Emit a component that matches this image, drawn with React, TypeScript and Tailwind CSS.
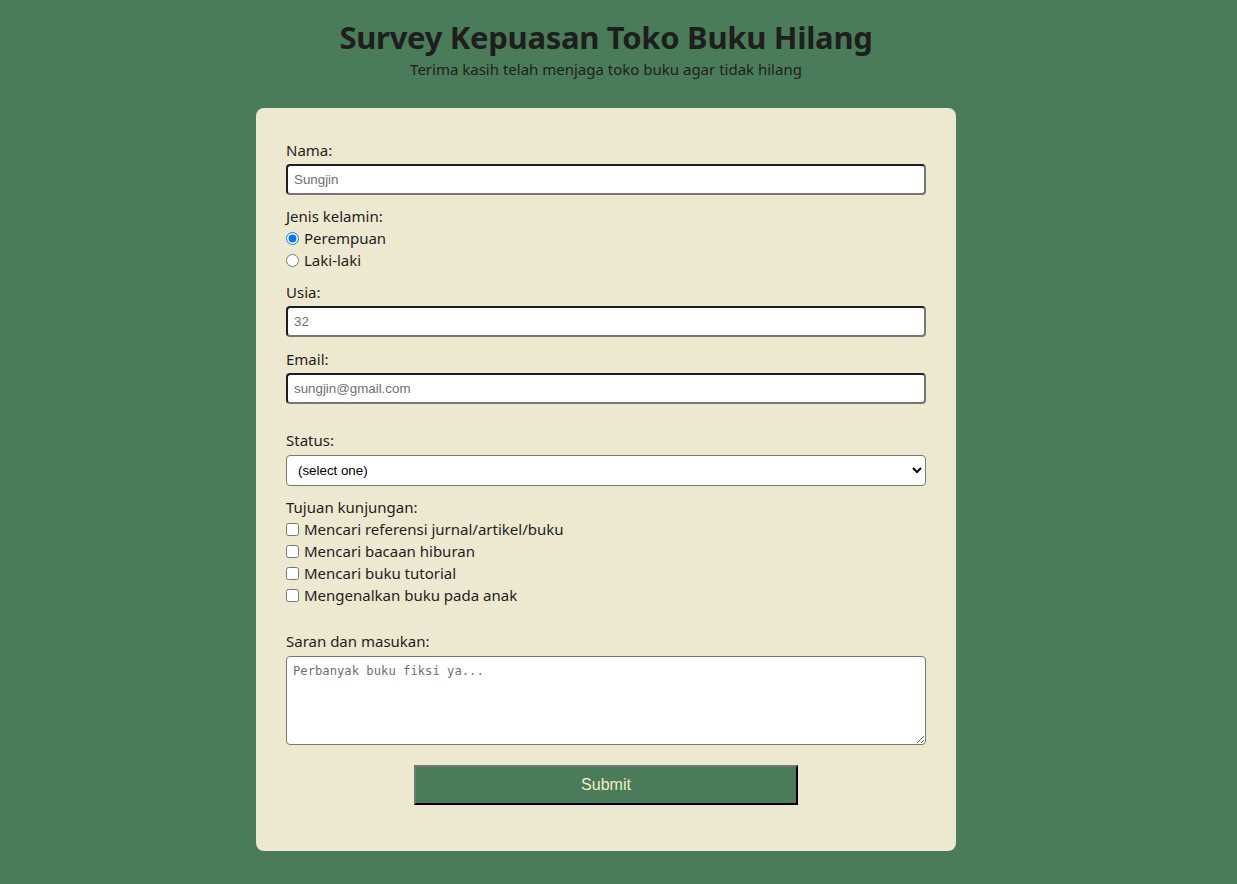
import { useState } from 'react'

const purposes = [
  'Mencari referensi jurnal/artikel/buku',
  'Mencari bacaan hiburan',
  'Mencari buku tutorial',
  'Mengenalkan buku pada anak',
]

const inputClass =
  "block mt-[3px] w-full h-[31px] bg-white rounded-[4px] border-2 border-t-[#1e1e1e] border-l-[#1e1e1e] border-r-[#767676] border-b-[#767676] px-[6px] text-[13.33px] font-['Liberation_Sans',Arial,sans-serif] text-black placeholder:text-[#6f6f6f] outline-none"

export default function App() {
  const [gender, setGender] = useState('perempuan')

  return (
    <div className="min-h-screen bg-[#4a7c59] font-['Noto_Sans',sans-serif] text-[#1e1e1e] pb-[33px]">
      <div className="w-[1212px]">
        <header className="pt-[15px] text-center">
          <h1 className="text-[31px] font-bold leading-[44px] tracking-[-0.3px]">Survey Kepuasan Toko Buku Hilang</h1>
          <p className="text-[15px] leading-[20px] text-[#1e1e1e]">Terima kasih telah menjaga toko buku agar tidak hilang</p>
        </header>

        <form
          className="mx-auto mt-[29px] w-[700px] rounded-[8px] bg-[#ede8d0] px-[30px] pt-[31px] pb-[46px] text-[15px] leading-[22px]"
          onSubmit={(e) => e.preventDefault()}
        >
          <label className="block">Nama:</label>
          <input className={inputClass} placeholder="Sungjin" />

          <div className="mt-[10px]">Jenis kelamin:</div>
          <label className="flex items-center gap-[5px]">
            <input
              type="radio"
              name="gender"
              className="m-0 h-[13px] w-[13px] accent-[#0075ff]"
              checked={gender === 'perempuan'}
              onChange={() => setGender('perempuan')}
            />
            Perempuan
          </label>
          <label className="flex items-center gap-[5px]">
            <input
              type="radio"
              name="gender"
              className="m-0 h-[13px] w-[13px]"
              checked={gender === 'laki'}
              onChange={() => setGender('laki')}
            />
            Laki-laki
          </label>

          <label className="mt-[10px] block">Usia:</label>
          <input className={inputClass} placeholder="32" />

          <label className="mt-[11px] block">Email:</label>
          <input className={inputClass} placeholder="sungjin@gmail.com" />

          <label className="mt-[25px] block">Status:</label>
          <select className="mt-[4px] block h-[31px] w-full rounded-[4px] border border-[#767676] bg-white px-[7px] text-[13.33px] text-black font-['Liberation_Sans',Arial,sans-serif]">
            <option>(select one)</option>
          </select>

          <div className="mt-[10px]">Tujuan kunjungan:</div>
          {purposes.map((p) => (
            <label key={p} className="flex items-center gap-[5px]">
              <input type="checkbox" className="m-0 h-[13px] w-[13px]" />
              {p}
            </label>
          ))}

          <label className="mt-[24px] block">Saran dan masukan:</label>
          <textarea
            className="mt-[4px] block h-[89px] w-full rounded-[4px] border border-[#767676] bg-white px-[6px] py-[6px] text-[12.2px] leading-[16px] font-['DejaVu_Sans_Mono','Liberation_Mono',monospace] placeholder:text-[#6f6f6f] outline-none"
            placeholder="Perbanyak buku fiksi ya..."
          />

          <div className="mt-[20px] flex justify-center">
            <button
              type="submit"
              className="h-[40px] w-[384px] border-2 border-t-[#767676] border-l-[#767676] border-r-black border-b-black bg-[#4a7c59] text-[16px] text-[#f3ecc8] font-['Liberation_Sans',Arial,sans-serif]"
            >
              Submit
            </button>
          </div>
        </form>
      </div>
    </div>
  )
}
